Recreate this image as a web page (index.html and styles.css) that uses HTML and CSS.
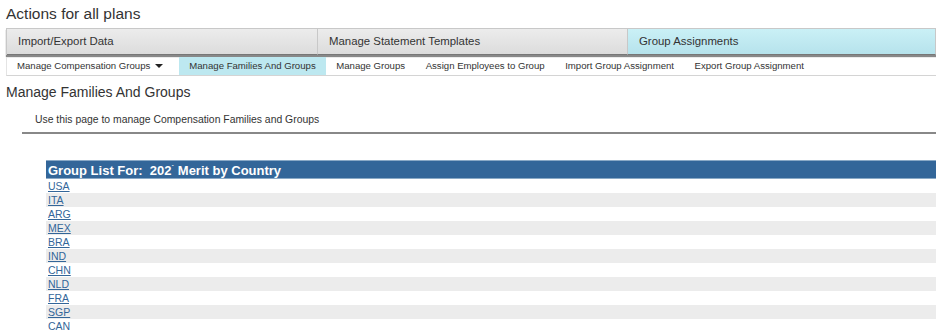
FILE: index.html
```html
<!DOCTYPE html>
<html lang="en">
<head>
    <meta charset="UTF-8">
    <title>Actions for all plans</title>
    <link rel="stylesheet" href="styles.css">
</head>
<body>
    <h1 class="page-title">Actions for all plans</h1>

    <div class="main-tabs">
        <div class="main-tab">Import/Export Data</div>
        <div class="main-tab">Manage Statement Templates</div>
        <div class="main-tab active">Group Assignments</div>
    </div>

    <div class="sub-tabs">
        <div class="sub-tab">Manage Compensation Groups <span class="caret"></span></div>
        <div class="sub-tab active">Manage Families And Groups</div>
        <div class="sub-tab">Manage Groups</div>
        <div class="sub-tab">Assign Employees to Group</div>
        <div class="sub-tab">Import Group Assignment</div>
        <div class="sub-tab">Export Group Assignment</div>
    </div>

    <h2 class="section-title">Manage Families And Groups</h2>
    <div class="intro">Use this page to manage Compensation Families and Groups</div>

    <table class="group-list">
        <thead>
            <tr><th>Group List For:&nbsp; 202<sup>`</sup> Merit by Country</th></tr>
        </thead>
        <tbody>
            <tr><td><a href="#">USA</a></td></tr>
            <tr><td><a href="#">ITA</a></td></tr>
            <tr><td><a href="#">ARG</a></td></tr>
            <tr><td><a href="#">MEX</a></td></tr>
            <tr><td><a href="#">BRA</a></td></tr>
            <tr><td><a href="#">IND</a></td></tr>
            <tr><td><a href="#">CHN</a></td></tr>
            <tr><td><a href="#">NLD</a></td></tr>
            <tr><td><a href="#">FRA</a></td></tr>
            <tr><td><a href="#">SGP</a></td></tr>
            <tr><td><a href="#">CAN</a></td></tr>
        </tbody>
    </table>
</body>
</html>
```

FILE: styles.css
```css
* {
    margin: 0;
    padding: 0;
    box-sizing: border-box;
}

body {
    font-family: "Liberation Sans", Arial, sans-serif;
    color: #333;
    background: #fff;
    padding: 0 0 0 6px;
    overflow: hidden;
}

.page-title {
    font-size: 15.5px;
    font-weight: normal;
    color: #333;
    height: 28px;
    padding-top: 4px;
    line-height: 20px;
}

.main-tabs {
    display: grid;
    grid-template-columns: 311px 310px 1fr;
    height: 27px;
    border-top: 1px solid #c8c8c8;
    border-left: 1px solid #c8c8c8;
    box-shadow: 0 2px 1px #888;
}

.main-tab {
    font-size: 11.4px;
    line-height: 25px;
    padding-left: 11px;
    color: #333;
    background: linear-gradient(#ececec, #dcdcdc);
    border-right: 1px solid #c8c8c8;
    border-bottom: 1px solid #777;
}

.main-tab.active {
    background: linear-gradient(#caf0f6, #b6e3ec);
}

.sub-tabs {
    display: flex;
    height: 19px;
    margin-top: 2px;
    border-bottom: 1px solid #d4d4d4;
    border-left: 1px solid #e4e4e4;
}

.sub-tab {
    font-size: 9.6px;
    line-height: 18px;
    padding: 0 10.3px;
    color: #333;
    white-space: nowrap;
}

.sub-tab:first-child {
    padding: 0 16px 0 10px;
}

.sub-tab.active {
    background: #bde8f0;
}

.caret {
    display: inline-block;
    width: 0;
    height: 0;
    margin-left: 2px;
    vertical-align: 1px;
    border-left: 4px solid transparent;
    border-right: 4px solid transparent;
    border-top: 4px solid #222;
}

.section-title {
    font-size: 14px;
    font-weight: normal;
    color: #333;
    margin-top: 8px;
    line-height: 17px;
}

.intro {
    font-size: 10.4px;
    line-height: 14px;
    margin: 12px 0 0 16px;
    padding: 0 0 5px 13px;
    border-bottom: 2px solid #888;
}

.group-list {
    border-collapse: collapse;
    width: calc(100% - 40px);
    margin: 26px 0 0 40px;
}

.group-list th {
    background: #336699;
    color: #fff;
    font-size: 13px;
    font-weight: bold;
    text-align: left;
    height: 16px;
    line-height: 14px;
    padding: 0 2px;
    border-top: 1px solid #8aa9c6;
    border-bottom: 1px solid #8aa9c6;
}

.group-list th sup {
    font-size: 8px;
    vertical-align: 5px;
}

.group-list td {
    height: 14px;
    line-height: 14px;
    font-size: 10.5px;
    padding: 0 2px;
}

.group-list tbody tr:nth-child(even) td {
    background: #ececec;
}

.group-list a {
    color: #336699;
}
```
